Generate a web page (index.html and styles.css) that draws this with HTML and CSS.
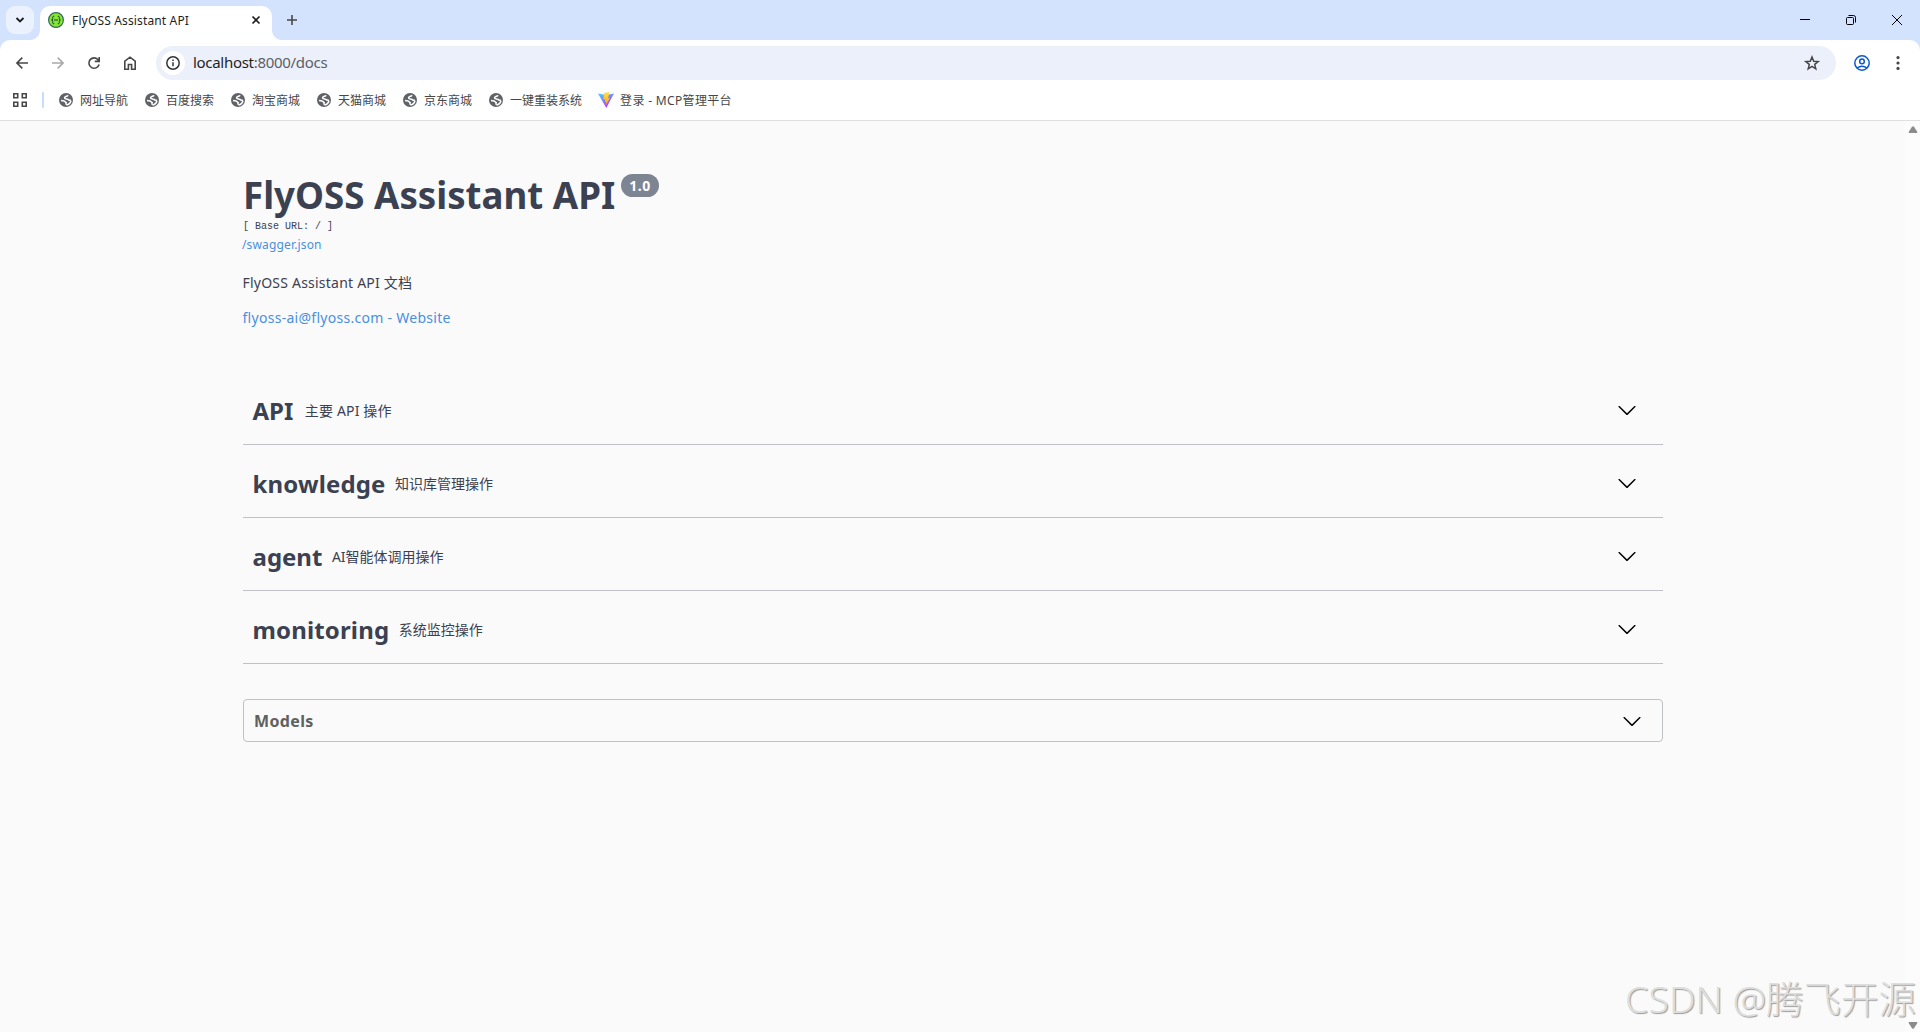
FILE: index.html
```html
<!DOCTYPE html>
<html lang="zh-CN">
<head>
<meta charset="utf-8">
<title>FlyOSS Assistant API</title>
<link rel="stylesheet" href="styles.css">
</head>
<body>
<svg class="defs" width="0" height="0" aria-hidden="true">
  <symbol id="globe" viewBox="0 0 14 14">
    <circle cx="7" cy="7" r="7" fill="#5f6368"/>
    <path d="M9 2.200C8.600 3.600 5.600 3 5.500 5 5.600 6.200 8 5.700 8.800 6.300 9.500 7.300 10.500 7.500 12 7.200M12 7.500C11.500 9.800 9.600 11.600 7.400 11.900M2 7.500 5 8 7.200 9.600 6.800 11.700" fill="none" stroke="#fff" stroke-width="1.500"/>
  </symbol>
  <symbol id="chevron" viewBox="0 0 20 20">
    <path d="M17.418 6.109c.272-.268.709-.268.979 0s.271.701 0 .969l-7.908 7.830c-.27.268-.707.268-.979 0l-7.908-7.830c-.27-.268-.27-.701 0-.969s.709-.268.979 0L10 13.250z"/>
  </symbol>
</svg>

<header class="browser">
  <div class="tab-strip">
    <div class="tab-search"><svg width="10" height="6" viewBox="0 0 10 6"><path d="M1.500 1 5 4.500 8.500 1" fill="none" stroke="#1f1f1f" stroke-width="1.900"/></svg></div>
    <div class="tab">
      <svg width="16" height="16" viewBox="0 0 16 16"><circle cx="8" cy="8" r="7.400" fill="#85ea2d" stroke="#37695c" stroke-width="1.200"/><path d="M6.300 4.200H5.800Q4.700 4.200 4.700 5.300V6.700Q4.700 8 3.500 8 4.700 8 4.700 9.300V10.700Q4.700 11.800 5.800 11.800H6.300M9.700 4.200H10.200Q11.300 4.200 11.300 5.300V6.700Q11.300 8 12.500 8 11.300 8 11.300 9.300V10.700Q11.300 11.800 10.200 11.800H9.700M6 8H10" fill="none" stroke="#173647" stroke-width="1"/></svg>
      <span class="tab-title">FlyOSS Assistant API</span>
      <svg class="tab-close" width="8" height="8" viewBox="0 0 8 8"><path d="M.5.5l7 7M7.500.5l-7 7" stroke="#1f1f1f" stroke-width="1.700"/></svg>
    </div>
    <svg class="new-tab" width="10" height="10" viewBox="0 0 10 10"><path d="M5 0v10M0 5h10" stroke="#474747" stroke-width="1.600"/></svg>
    <div class="window-controls">
      <svg width="10" height="10" viewBox="0 0 10 10"><path d="M0 4.500h10" stroke="#000"/></svg>
      <svg width="10" height="10" viewBox="0 0 10 10" fill="none" stroke="#000"><rect x=".5" y="2.500" width="7" height="7" rx="1"/><path d="M2.500.5h5q2 0 2 2v5"/></svg>
      <svg width="10" height="10" viewBox="0 0 10 10"><path d="M0 0l10 10M10 0L0 10" stroke="#000"/></svg>
    </div>
  </div>

  <div class="toolbar">
    <svg width="12" height="12" viewBox="0 0 12 12" fill="none" stroke="#474747" stroke-width="1.600"><path d="M12 6H1M6.300.6.9 6l5.400 5.400"/></svg>
    <svg width="12" height="12" viewBox="0 0 12 12" fill="none" stroke="#a9a9a9" stroke-width="1.600"><path d="M0 6h11M5.700.6 11.100 6l-5.400 5.400"/></svg>
    <svg width="12" height="12" viewBox="0 0 12 12" fill="none" stroke="#474747" stroke-width="1.600"><path d="M11.100 7.500A5.200 5.200 0 1 1 10.300 3L11.200 4.200M11.200 0v4.400H6.800"/></svg>
    <svg width="12" height="14" viewBox="0 0 12 14" fill="none" stroke="#474747" stroke-width="1.600"><path d="M.8 13.200V5.200L6 1.200l5.200 4v8H7.600V8.500H4.400v4.700z"/></svg>
    <div class="omnibox">
      <span class="site-info"><svg width="14" height="14" viewBox="0 0 14 14"><circle cx="7" cy="7" r="6.200" fill="none" stroke="#30343a" stroke-width="1.500"/><path d="M7 6.200v4M7 3.500v1.600" stroke="#30343a" stroke-width="1.500"/></svg></span>
      <span class="url">localhost<span class="url-path">:8000/docs</span></span>
      <svg class="star" width="16" height="16" viewBox="0 0 16 16"><path d="M8 2l1.700 4.200 4.500.3-3.500 2.900 1.100 4.400L8 11.400l-3.800 2.400 1.100-4.400L1.800 6.500l4.500-.3z" fill="none" stroke="#474747" stroke-width="1.500"/></svg>
    </div>
    <svg class="profile" width="16" height="16" viewBox="0 0 16 16" fill="none" stroke="#0b57d0" stroke-width="1.500"><circle cx="8" cy="8" r="7.200"/><circle cx="8" cy="6.400" r="2.300"/><path d="M2.900 13q5.100-3.400 10.200 0"/></svg>
    <svg class="menu" width="4" height="14" viewBox="0 0 4 14" fill="#474747"><circle cx="2" cy="1.600" r="1.600"/><circle cx="2" cy="7" r="1.600"/><circle cx="2" cy="12.400" r="1.600"/></svg>
  </div>

  <nav class="bookmarks">
    <svg class="apps" width="14" height="14" viewBox="0 0 14 14" fill="none" stroke="#474747" stroke-width="1.600"><path d="M.8.8h3.900v3.900H.8zM9.300.8h3.900v3.900H9.300zM.8 9.300h3.900v3.900H.8zM9.300 9.300h3.900v3.900H9.300z"/></svg>
    <span class="divider"></span>
    <span class="bookmark"><svg width="14" height="14"><use href="#globe"/></svg>网址导航</span>
    <span class="bookmark"><svg width="14" height="14"><use href="#globe"/></svg>百度搜索</span>
    <span class="bookmark"><svg width="14" height="14"><use href="#globe"/></svg>淘宝商城</span>
    <span class="bookmark"><svg width="14" height="14"><use href="#globe"/></svg>天猫商城</span>
    <span class="bookmark"><svg width="14" height="14"><use href="#globe"/></svg>京东商城</span>
    <span class="bookmark"><svg width="14" height="14"><use href="#globe"/></svg>一键重装系统</span>
    <span class="bookmark vite"><svg width="16" height="16" viewBox="0 0 16 16"><defs><linearGradient id="v" x2=".5" y2="1"><stop stop-color="#41d1ff"/><stop offset="1" stop-color="#bd34fe"/></linearGradient><linearGradient id="b" x2="0" y2="1"><stop stop-color="#ffdf50"/><stop offset="1" stop-color="#ffa800"/></linearGradient></defs><path d="M0 1.600 8 3l8-1.400L8.300 16z" fill="url(#v)"/><path d="M11.600 0 5.900 1.100 5.400 7.600l2-.3-.5 2.800 1.300-.3-.7 3.700 4.400-7.500-1.900.2.800-3.200z" fill="url(#b)"/></svg><span class="vite-label">登录 - MCP管理平台</span></span>
  </nav>
</header>

<main class="page">
  <div class="wrapper">
    <section class="info">
      <h1 class="title"><span class="title-text">FlyOSS Assistant API</span><span class="version">1.0</span></h1>
      <pre class="base-url">[ Base URL: / ]</pre>
      <a class="spec-link">/swagger.json</a>
      <p class="description">FlyOSS Assistant API 文档</p>
      <a class="contact">flyoss-ai@flyoss.com - Website</a>
    </section>

    <section class="tags">
      <div class="tag"><h3>API</h3><small class="desc-api">主要 API 操作</small><svg width="20" height="20"><use href="#chevron"/></svg></div>
      <div class="tag"><h3 class="wide">knowledge</h3><small>知识库管理操作</small><svg width="20" height="20"><use href="#chevron"/></svg></div>
      <div class="tag"><h3>agent</h3><small>AI智能体调用操作</small><svg width="20" height="20"><use href="#chevron"/></svg></div>
      <div class="tag"><h3 class="wide">monitoring</h3><small>系统监控操作</small><svg width="20" height="20"><use href="#chevron"/></svg></div>
    </section>

    <section class="models"><h4>Models</h4><svg width="20" height="20"><use href="#chevron"/></svg></section>
  </div>
  <div class="scrollbar">
    <svg width="10" height="8" viewBox="0 0 10 8"><path d="M4 .8Q5-.4 6 .8L9.400 6Q9.500 7 8.500 7H1.500Q.5 7 .6 6z" fill="#8b8b8b"/></svg>
    <svg width="10" height="8" viewBox="0 0 10 8"><path d="M4 7.200Q5 8.400 6 7.200L9.400 2Q9.500 1 8.500 1H1.500Q.5 1 .6 2z" fill="#8b8b8b"/></svg>
  </div>
  <div class="watermark">CSDN @腾飞开源</div>
</main>
</body>
</html>
```
FILE: styles.css
```css
* { box-sizing: border-box; }
body {
  margin: 0;
  height: 1032px;
  overflow: hidden;
  display: flex;
  flex-direction: column;
  background: #fafafa;
  color: #3b4151;
  font-family: "Noto Sans", "Noto Sans CJK SC", sans-serif;
}
h1, h3, h4, p, pre { margin: 0; }
svg { display: block; flex: none; overflow: visible; }
.defs { position: absolute; }

/* Browser chrome */
.browser { height: 121px; flex: none; background: #d3e3fd; border-bottom: 1px solid #dedfe0; white-space: nowrap; }
.tab-strip { height: 40px; display: flex; align-items: center; padding-left: 6px; }
.tab-search { width: 28px; height: 28px; border-radius: 9px; background: #ebf1fd; display: grid; place-items: center; }
.tab {
  position: relative;
  align-self: flex-end;
  width: 232px;
  height: 34px;
  margin-left: 6px;
  padding: 0 12px 6px 8px;
  display: flex;
  align-items: center;
  background: #fff;
  border-radius: 10px 10px 0 0;
}
.tab::before, .tab::after { content: ""; position: absolute; bottom: 0; width: 10px; height: 10px; }
.tab::before { left: -10px; background: radial-gradient(circle at 0 0, transparent 9.5px, #fff 10.5px); }
.tab::after { right: -10px; background: radial-gradient(circle at 100% 0, transparent 9.5px, #fff 10.5px); }
.tab-title { margin-left: 8px; padding-top: 2px; font-size: 12px; line-height: 16px; letter-spacing: .15px; color: #1f1f1f; }
.tab-close { margin-left: auto; }
.new-tab { margin-left: 15px; }
.window-controls { margin-left: auto; display: flex; gap: 36px; padding-right: 18px; }
.toolbar { height: 46px; background: #fff; border-radius: 10px 10px 0 0; display: flex; align-items: center; padding-left: 16px; }
.toolbar > svg { margin-right: 24px; }
.omnibox { flex: 1; height: 34px; margin-left: -4px; border-radius: 17px; background: #ecf0fa; display: flex; align-items: center; padding: 0 16px 0 5px; }
.site-info { width: 24px; height: 24px; border-radius: 50%; background: #fff; display: grid; place-items: center; }
.url { margin-left: 8px; padding-bottom: 2px; font-size: 15px; line-height: 20px; letter-spacing: -.3px; color: #1f1f1f; }
.url-path { color: #5b5f66; }
.star { margin-left: auto; }
.toolbar > .profile { margin: 0 0 0 18px; }
.toolbar > .menu { margin: 0 20px 0 26px; }
.bookmarks { height: 34px; padding: 0 0 6px 13px; background: #fff; display: flex; align-items: center; font-size: 12px; line-height: 18px; color: #474747; }
.divider { width: 2px; height: 16px; margin: 0 15px 0 15px; border-radius: 1px; background: #c7dbfb; }
.bookmark { display: flex; align-items: center; gap: 7px; margin-right: 17px; padding-top: 1px; }
.bookmark svg { margin-top: -1px; }
.vite { gap: 6px; margin-left: -1px; }
.vite-label { letter-spacing: .33px; }

/* Documentation page */
.page { position: relative; flex: 1; display: flex; justify-content: space-between; }
.wrapper { width: 1460px; margin-left: 223px; padding: 50px 20px 0; }
.info { height: 218px; white-space: nowrap; }
.title { display: flex; height: 48px; font-size: 36.7px; line-height: 48px; }
.version { height: 23px; margin: 3px 0 0 6px; padding: 0 8px; border-radius: 12px; background: #7d8492; color: #fff; font-size: 14px; line-height: 23px; letter-spacing: .5px; }
.base-url { height: 16px; font: 10px/16px "Liberation Mono", monospace; color: #3b4151; }
.spec-link, .contact { display: block; color: #4990e2; }
.spec-link { font-size: 12px; line-height: 16px; margin: 2px 0 0 -1px; letter-spacing: .15px; }
.description { margin: 20px 0 0 -.5px; font-size: 14px; line-height: 20px; letter-spacing: .22px; }
.contact { margin: 15px 0 0 -.5px; font-size: 14px; line-height: 20px; letter-spacing: .28px; }
.tag { height: 73px; padding: 6px 26px 0 9.5px; display: flex; align-items: center; border-bottom: 1px solid #bfc1c6; }
.tag:first-child { height: 56px; padding-top: 0; padding-bottom: 12px; }
.tag h3 { font-size: 24px; line-height: 32px; }
.tag .wide { letter-spacing: .15px; }
.tag small { margin-left: 9.5px; font-size: 14px; line-height: 20px; }
.tag .desc-api { margin-left: 11.5px; letter-spacing: .15px; }
.tag svg { margin: -2px 0 0 auto; }
.models { height: 43px; margin-top: 35px; padding: 0 20px 0 10px; border: 1px solid #bfc1c5; border-radius: 4px; display: flex; align-items: center; justify-content: space-between; }
.models h4 { font-size: 16px; line-height: 22px; letter-spacing: .35px; color: #606060; }
.scrollbar { width: 15px; padding: 5px 0 3px 3px; background: #fcfcfc; display: flex; flex-direction: column; justify-content: space-between; }
.watermark {
  position: absolute;
  right: 4px;
  bottom: 8px;
  font-size: 37.5px;
  line-height: 50px;
  font-weight: 300;
  color: #dedede;
  text-shadow: 1px 1px 1px #9b9b9b;
  white-space: nowrap;
}
```
